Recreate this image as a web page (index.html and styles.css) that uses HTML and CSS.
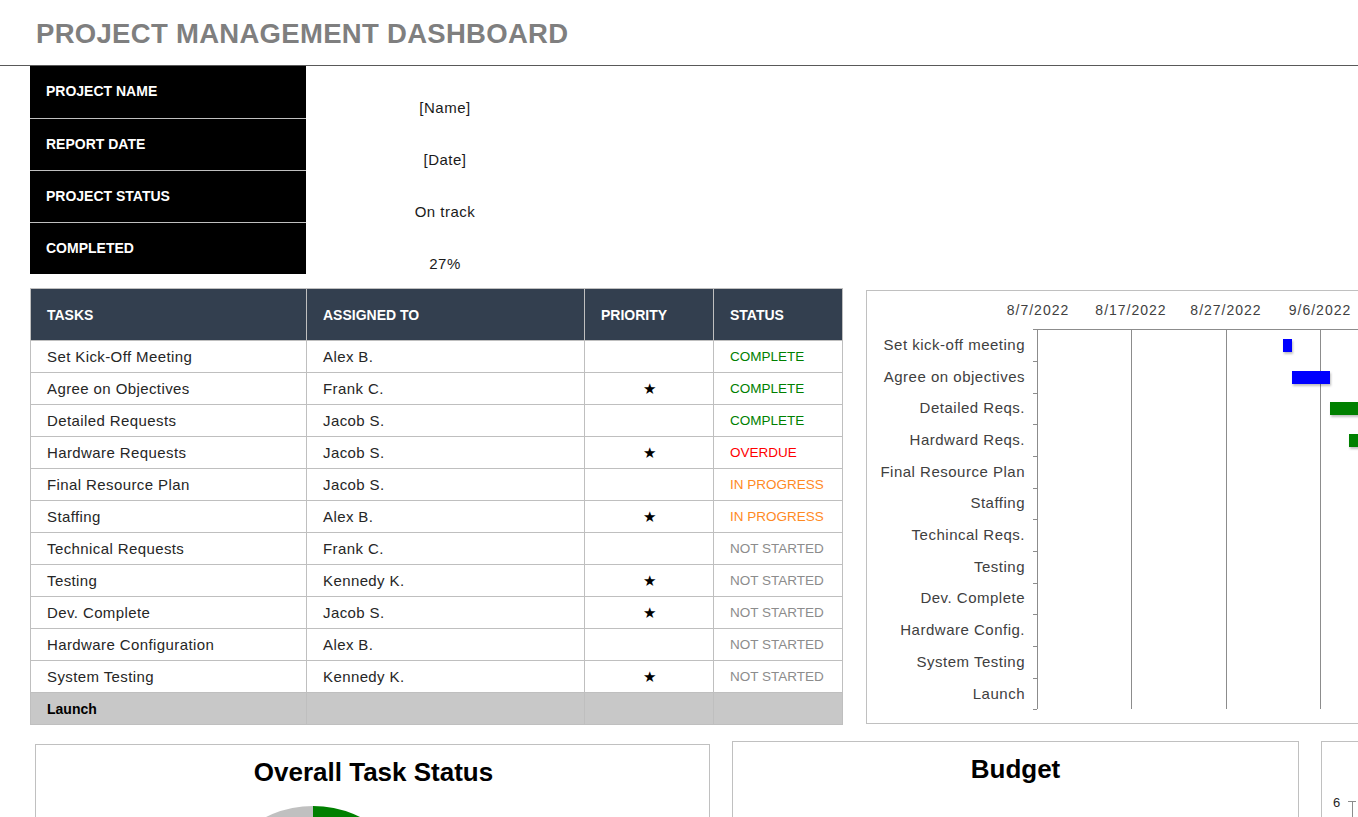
FILE: index.html
```html
<!DOCTYPE html>
<html>
<head>
<meta charset="utf-8">
<link rel="stylesheet" href="styles.css">
</head>
<body>
<header class="page-head">
  <h1 class="title">PROJECT MANAGEMENT DASHBOARD</h1>
</header>

<section class="info">
  <div class="info-label">PROJECT NAME</div><div class="info-value">[Name]</div>
  <div class="info-label">REPORT DATE</div><div class="info-value">[Date]</div>
  <div class="info-label">PROJECT STATUS</div><div class="info-value">On track</div>
  <div class="info-label">COMPLETED</div><div class="info-value">27%</div>
</section>

<section class="mid">
  <table class="tasks">
    <colgroup>
      <col class="c-task"><col class="c-who"><col class="c-pri"><col class="c-status">
    </colgroup>
    <thead>
      <tr><th>TASKS</th><th>ASSIGNED TO</th><th>PRIORITY</th><th>STATUS</th></tr>
    </thead>
    <tbody>
      <tr><td>Set Kick-Off Meeting</td><td>Alex B.</td><td class="pri"></td><td class="st st-complete">COMPLETE</td></tr>
      <tr><td>Agree on Objectives</td><td>Frank C.</td><td class="pri">★</td><td class="st st-complete">COMPLETE</td></tr>
      <tr><td>Detailed Requests</td><td>Jacob S.</td><td class="pri"></td><td class="st st-complete">COMPLETE</td></tr>
      <tr><td>Hardware Requests</td><td>Jacob S.</td><td class="pri">★</td><td class="st st-overdue">OVERDUE</td></tr>
      <tr><td>Final Resource Plan</td><td>Jacob S.</td><td class="pri"></td><td class="st st-progress">IN PROGRESS</td></tr>
      <tr><td>Staffing</td><td>Alex B.</td><td class="pri">★</td><td class="st st-progress">IN PROGRESS</td></tr>
      <tr><td>Technical Requests</td><td>Frank C.</td><td class="pri"></td><td class="st st-not">NOT STARTED</td></tr>
      <tr><td>Testing</td><td>Kennedy K.</td><td class="pri">★</td><td class="st st-not">NOT STARTED</td></tr>
      <tr><td>Dev. Complete</td><td>Jacob S.</td><td class="pri">★</td><td class="st st-not">NOT STARTED</td></tr>
      <tr><td>Hardware Configuration</td><td>Alex B.</td><td class="pri"></td><td class="st st-not">NOT STARTED</td></tr>
      <tr><td>System Testing</td><td>Kennedy K.</td><td class="pri">★</td><td class="st st-not">NOT STARTED</td></tr>
      <tr class="launch"><td>Launch</td><td></td><td></td><td></td></tr>
    </tbody>
  </table>

  <div class="gantt">
    <svg class="gantt-svg" width="492" height="432" viewBox="0 0 492 432">
      <g transform="translate(-1,1)">
        <g class="dates">
          <text x="172" y="23">8/7/2022</text>
          <text x="265" y="23">8/17/2022</text>
          <text x="360" y="23">8/27/2022</text>
          <text x="454" y="23">9/6/2022</text>
        </g>
        <g class="grid">
          <line x1="167" y1="37.5" x2="494" y2="37.5"/>
          <line x1="171.5" y1="37" x2="171.5" y2="417"/>
          <line x1="265.5" y1="37" x2="265.5" y2="417"/>
          <line x1="360.5" y1="37" x2="360.5" y2="417"/>
          <line x1="454.5" y1="37" x2="454.5" y2="417"/>
          <line x1="167" y1="69.5" x2="171" y2="69.5"/>
          <line x1="167" y1="101.5" x2="171" y2="101.5"/>
          <line x1="167" y1="132.5" x2="171" y2="132.5"/>
          <line x1="167" y1="164.5" x2="171" y2="164.5"/>
          <line x1="167" y1="196.5" x2="171" y2="196.5"/>
          <line x1="167" y1="227.5" x2="171" y2="227.5"/>
          <line x1="167" y1="259.5" x2="171" y2="259.5"/>
          <line x1="167" y1="291.5" x2="171" y2="291.5"/>
          <line x1="167" y1="322.5" x2="171" y2="322.5"/>
          <line x1="167" y1="354.5" x2="171" y2="354.5"/>
          <line x1="167" y1="386.5" x2="171" y2="386.5"/>
          <line x1="167" y1="417.5" x2="171" y2="417.5"/>
        </g>
        <g class="labels">
          <text x="159" y="58">Set kick-off meeting</text>
          <text x="159" y="90">Agree on objectives</text>
          <text x="159" y="121">Detailed Reqs.</text>
          <text x="159" y="153">Hardward Reqs.</text>
          <text x="159" y="185">Final Resource Plan</text>
          <text x="159" y="216">Staffing</text>
          <text x="159" y="248">Techincal Reqs.</text>
          <text x="159" y="280">Testing</text>
          <text x="159" y="311">Dev. Complete</text>
          <text x="159" y="343">Hardware Config.</text>
          <text x="159" y="375">System Testing</text>
          <text x="159" y="407">Launch</text>
        </g>
        <g class="bars">
          <rect class="bar-blue" x="417" y="47" width="9" height="13"/>
          <rect class="bar-blue" x="426" y="79" width="38" height="13"/>
          <rect class="bar-green" x="464" y="110" width="40" height="13"/>
          <rect class="bar-green" x="483" y="142" width="20" height="13"/>
        </g>
      </g>
    </svg>
  </div>
</section>

<section class="bottom">
  <div class="card card-status">
    <h2 class="card-title">Overall Task Status</h2>
    <div class="pie"></div>
  </div>
  <div class="card card-budget">
    <h2 class="card-title budget-title">Budget</h2>
  </div>
  <div class="card card-third">
    <div class="axis-row"><span class="axis-num">6</span><span class="axis-tick"></span></div>
  </div>
</section>
</body>
</html>
```

FILE: styles.css
```css
html, body {
  margin: 0;
  padding: 0;
  overflow: hidden;
  background: #ffffff;
}
body {
  width: 1358px;
  height: 817px;
  font-family: "Liberation Sans", Arial, sans-serif;
  color: #262626;
}

.page-head {
  height: 66px;
  border-bottom: 1px solid #595959;
  box-sizing: border-box;
  padding-left: 36px;
  padding-top: 2px;
  display: flex;
  align-items: center;
}
.title {
  margin: 0;
  font-size: 27.5px;
  font-weight: bold;
  color: #7f7f7f;
  letter-spacing: 0.3px;
}

.info {
  margin-left: 30px;
  display: grid;
  grid-template-columns: 276px 278px;
  grid-auto-rows: 52px;
  width: 554px;
}
.info-label {
  background: #000;
  color: #fff;
  font-weight: bold;
  font-size: 14px;
  padding-left: 16px;
  display: flex;
  align-items: center;
  border-top: 1px solid #bfbfbf;
  padding-bottom: 2px;
}
.info-label:first-child {
  border-top: none;
}
.info-value {
  font-size: 15px;
  letter-spacing: 0.5px;
  color: #1a1a1a;
  display: flex;
  align-items: flex-end;
  justify-content: center;
  padding-bottom: 2px;
}

.mid {
  display: flex;
  align-items: flex-start;
  gap: 23px;
  margin-top: 14px;
  margin-left: 30px;
}

.tasks {
  border-collapse: collapse;
  table-layout: fixed;
  width: 812px;
  flex: none;
  font-size: 15px;
}
.c-task { width: 276px; }
.c-who { width: 278px; }
.c-pri { width: 129px; }
.c-status { width: 129px; }

.tasks th {
  background: #333f4f;
  color: #ffffff;
  font-size: 14px;
  font-weight: bold;
  text-align: left;
  height: 52px;
  padding: 0 0 0 16px;
  border: 1px solid #bfbfbf;
  box-sizing: border-box;
}
.tasks td {
  height: 32px;
  padding: 0 0 0 16px;
  border: 1px solid #bfbfbf;
  box-sizing: border-box;
  white-space: nowrap;
  letter-spacing: 0.4px;
}
.tasks td.pri {
  padding: 0;
  text-align: center;
  font-size: 15px;
  color: #000;
  letter-spacing: 0;
}
.tasks td.st {
  font-size: 13.5px;
  letter-spacing: 0;
}
.st-complete { color: #008000; }
.st-overdue { color: #ff0000; }
.st-progress { color: #ff8a1f; }
.st-not { color: #8c8c8c; }

.tasks tr.launch td {
  background: #c8c8c8;
  font-weight: bold;
  color: #000;
  font-size: 14px;
  letter-spacing: 0;
}

.gantt {
  flex: none;
  margin-top: 2px;
  width: 500px;
  height: 434px;
  border: 1px solid #c0c0c0;
  box-sizing: border-box;
}
.gantt-svg {
  display: block;
}
.dates text {
  font-family: "Liberation Sans", Arial, sans-serif;
  font-size: 14px;
  letter-spacing: 1px;
  fill: #404040;
  text-anchor: middle;
}
.grid line {
  stroke: #8c8c8c;
  stroke-width: 1;
}
.labels text {
  font-family: "Liberation Sans", Arial, sans-serif;
  font-size: 15px;
  letter-spacing: 0.5px;
  fill: #404040;
  text-anchor: end;
}
.bar-blue {
  fill: #0000ff;
  filter: drop-shadow(1px 2px 1px rgba(0,0,0,0.25));
}
.bar-green {
  fill: #008000;
  filter: drop-shadow(1px 2px 1px rgba(0,0,0,0.25));
}

.bottom {
  display: flex;
  align-items: flex-start;
  gap: 22px;
  margin-top: 16px;
  margin-left: 35px;
}
.card {
  flex: none;
  border: 1px solid #c0c0c0;
  height: 120px;
  box-sizing: border-box;
  overflow: hidden;
  background: #fff;
}
.card-status {
  width: 675px;
  margin-top: 3px;
  display: flex;
  flex-direction: column;
  align-items: center;
}
.card-budget {
  width: 567px;
}
.card-third {
  width: 120px;
}
.card-title {
  margin: 0;
  font-size: 26px;
  font-weight: bold;
  color: #000;
  text-align: center;
}
.card-status .card-title {
  padding-top: 12px;
  margin-left: 2px;
}
.pie {
  flex: none;
  width: 212px;
  height: 212px;
  border-radius: 50%;
  margin-top: 18px;
  margin-right: 120px;
  background: conic-gradient(#008000 0deg 97deg, #ff8a1f 97deg 150deg, #c0c0c0 150deg 360deg);
}
.budget-title {
  padding-top: 12px;
}
.axis-row {
  display: flex;
  align-items: flex-end;
  gap: 8px;
  margin-top: 54px;
  padding-left: 11px;
}
.axis-num {
  font-size: 13px;
  color: #262626;
  line-height: 14px;
}
.axis-tick {
  width: 8px;
  height: 8px;
  border-top: 1px solid #8c8c8c;
}
.axis-tick::after {
  content: "";
  display: block;
  width: 1px;
  height: 20px;
  background: #8c8c8c;
  margin-left: 4px;
}
```
